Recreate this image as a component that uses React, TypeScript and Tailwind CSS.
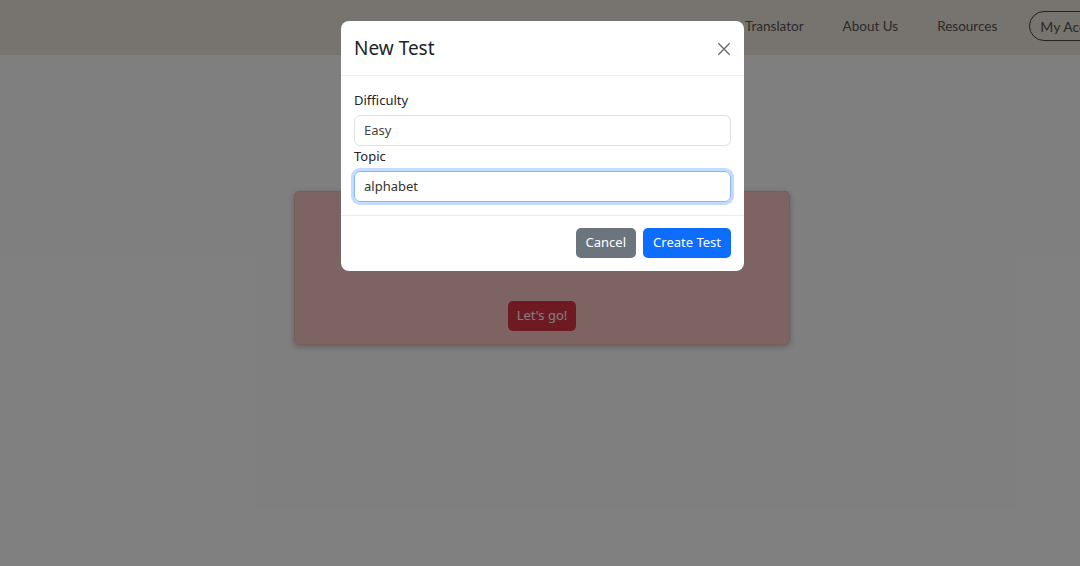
import React from "react";

export default function App() {
  const font = { fontFamily: '"Noto Sans", "Open Sans", Arial, sans-serif' };
  const navFont = { fontFamily: 'Lato, "Noto Sans", Arial, sans-serif' };
  return (
    <div className="relative h-[566px] w-[1080px] overflow-hidden bg-white" style={font}>
      {/* Navbar */}
      <nav className="flex h-[55px] items-center bg-[#eee6dc] text-[13.5px] text-[#555]" style={navFont}>
        <div className="ml-[725px] flex shrink-0 items-center pb-[3px]">
          <a className="px-[20px]">Translator</a>
          <a className="px-[19px]">About Us</a>
          <a className="px-[20px]">Resources</a>
          <button className="ml-[12px] h-[30px] shrink-0 whitespace-nowrap rounded-full border border-[#444] px-[10px] text-[14px]">
            My Account
          </button>
        </div>
      </nav>

      {/* Page content */}
      <div className="flex justify-center pl-[3px]">
        <div className="mt-[136px] flex h-[154px] w-[496px] flex-col items-center justify-end rounded-[5px] border border-[#f2b8b8] bg-[#fdc6c6] pb-[13px] shadow-[0_2px_6px_rgba(0,0,0,0.25)]">
          <button className="ml-[1px] h-[30px] rounded-[5px] bg-[#dc3545] px-[9px] text-[13px] text-white">
            Let's go!
          </button>
        </div>
      </div>

      {/* Backdrop */}
      <div className="absolute inset-0 bg-black/50" />

      {/* Modal */}
      <div className="absolute inset-0 flex justify-center pl-[5px] pt-[21px]">
        <div className="h-fit w-[403px] rounded-[8px] bg-white text-[#212529]">
          <div className="flex h-[55px] items-center justify-between border-b border-[#f0f0f0] px-[13px]">
            <h5 className="text-[19px] font-normal leading-[30px]">New Test</h5>
            <svg width="14" height="14" viewBox="0 0 16 16" className="mt-[1px]">
              <path d="M1.5 1.5 L14.5 14.5 M14.5 1.5 L1.5 14.5" stroke="#6c6c6c" strokeWidth="1.6" fill="none" />
            </svg>
          </div>
          <div className="px-[13px] pt-[14px] pb-[13px]">
            <label className="mb-[5px] block text-[13px] leading-[20px]">Difficulty</label>
            <div className="flex h-[31px] items-center rounded-[6px] border border-[#dee2e6] px-[9px] text-[13px] text-[#444]">
              Easy
            </div>
            <label className="mb-[5px] block text-[13px] leading-[20px]">Topic</label>
            <div className="flex h-[31px] items-center rounded-[6px] border border-[#86b7fe] px-[9px] text-[13px] text-[#333] shadow-[0_0_0_3px_rgba(13,110,253,0.25)]">
              alphabet
            </div>
          </div>
          <div className="flex justify-end gap-[7px] border-t border-[#e9eef3] px-[13px] pt-[12px] pb-[13px]">
            <button className="h-[30px] rounded-[5px] bg-[#6c757d] px-[10px] text-[13px] text-white">Cancel</button>
            <button className="h-[30px] rounded-[5px] bg-[#0d6efd] px-[10px] text-[13px] text-white">Create Test</button>
          </div>
        </div>
      </div>
    </div>
  );
}
